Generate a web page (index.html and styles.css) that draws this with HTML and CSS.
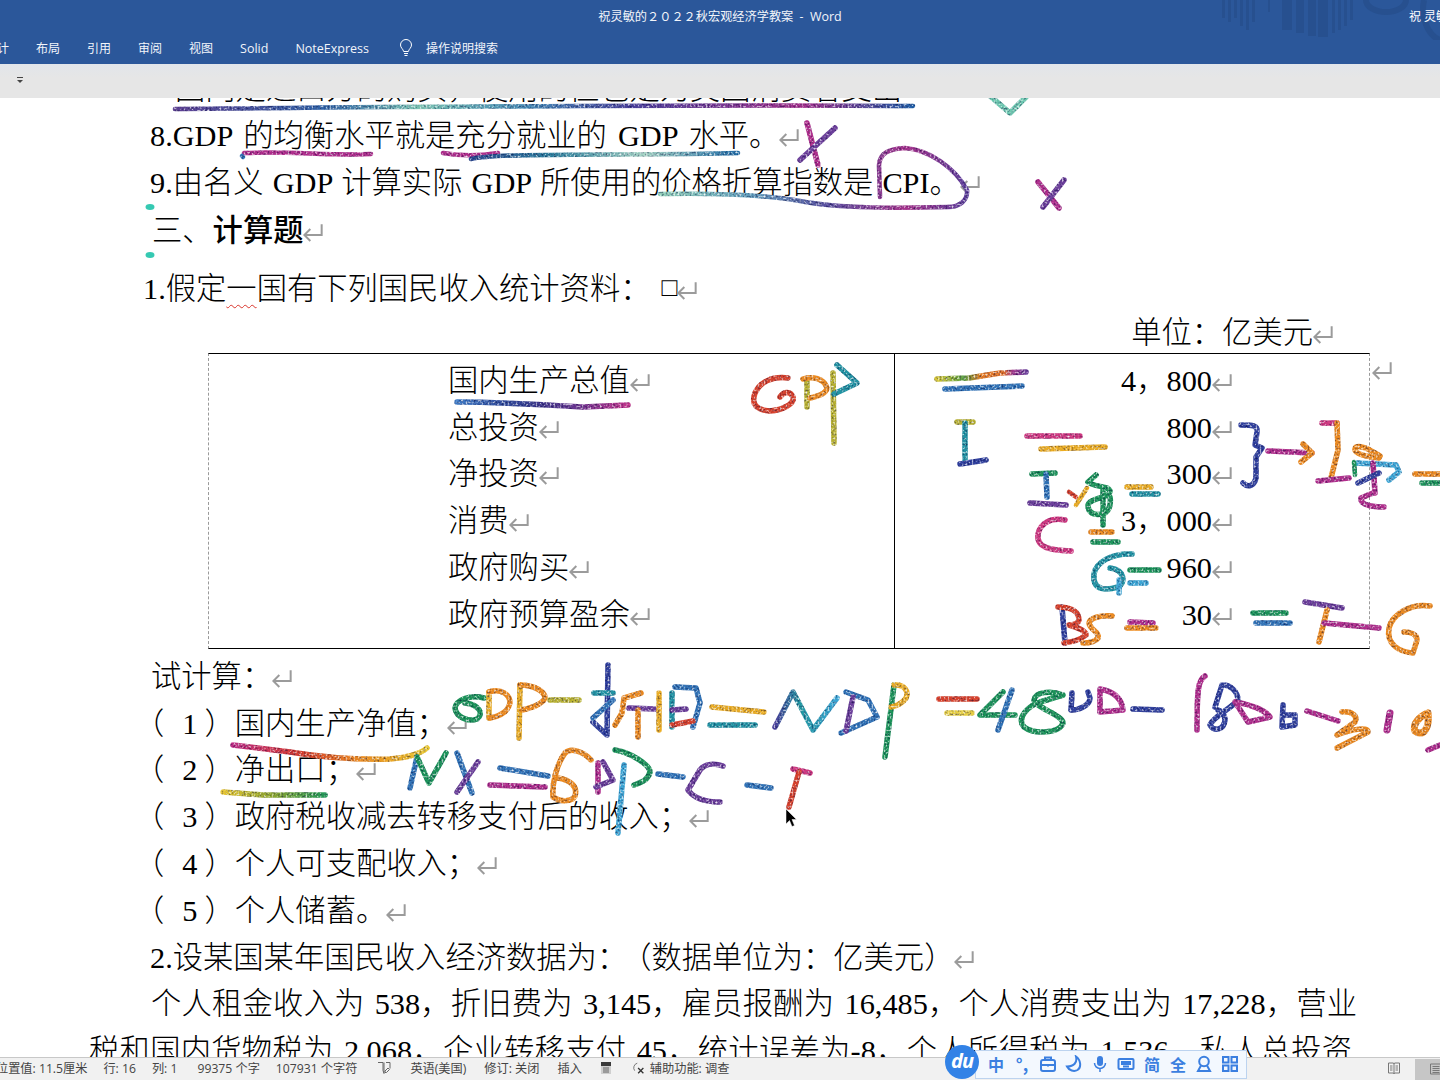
FILE: index.html
```html
<!DOCTYPE html>
<html lang="zh-CN">
<head>
<meta charset="utf-8">
<title>祝灵敏的2022秋宏观经济学教案 - Word</title>
<link rel="stylesheet" href="styles.css">
</head>
<body>
<svg class="sprite" aria-hidden="true">
  <symbol id="ret" viewBox="2 3 15 15"><path d="M16 4v8H3M7.500 7.500 3 12l4.500 4.500"/></symbol>
</svg>
<div class="page">
  <header class="ribbon">
    <svg class="ribbon-art" viewBox="0 0 220 40" aria-hidden="true">
      <rect x="2" y="0" width="3" height="18"/><rect x="8" y="0" width="3" height="22"/><rect x="14" y="0" width="3" height="18"/><rect x="20" y="0" width="3" height="26"/><rect x="26" y="0" width="3" height="30"/><rect x="32" y="0" width="3" height="22"/>
      <rect x="48" y="0" width="2" height="12"/><rect x="62" y="0" width="10" height="30"/><rect x="76" y="0" width="8" height="33"/><rect x="88" y="0" width="8" height="36"/><rect x="98" y="0" width="10" height="37"/><rect x="112" y="0" width="3" height="33"/><rect x="118" y="0" width="3" height="30"/><rect x="124" y="0" width="3" height="26"/><rect x="130" y="0" width="3" height="20"/>
      <path class="art-ring" d="M146 0a20 12 0 0 0 40 0M204 0a22 32 0 0 0 16 40"/>
    </svg>
    <div class="title-row">
      <span></span>
      <div class="doc-title">祝灵敏的２０２２秋宏观经济学教案&nbsp; -&nbsp; <span class="lat">Word</span></div>
      <div class="user-name">祝 灵敏</div>
    </div>
    <nav class="tab-row">
      <span>设计</span><span>布局</span><span>引用</span><span>审阅</span><span>视图</span><span class="lat">Solid</span><span class="lat">NoteExpress</span>
      <span class="tell">
        <svg class="bulb" viewBox="0 0 14 18" aria-hidden="true"><path d="M4.600 12.500C4.200 10 1.500 8.800 1.500 6a5.500 5.500 0 0 1 11 0c0 2.800-2.700 4-3.100 6.500zM5 14.500h4M5.500 16.500h3"/></svg>
        操作说明搜索
      </span>
    </nav>
  </header>
  <div class="qat">
    <svg class="qat-more" viewBox="0 0 8 8" aria-hidden="true"><path class="qat-line" d="M1 1.500h6"/><path class="qat-tri" d="M1 4h6L4 7z"/></svg>
  </div>

  <main class="doc">
    <div class="sheet">
      <p class="line p-first">国内是进口方的购买，使用的但也是为美国消费者支出</p>
      <p class="line p-8">8.GDP 的均衡水平就是充分就业的 GDP 水平。<svg class="ret"><use href="#ret"/></svg></p>
      <p class="line p-9">9.由名义 GDP 计算实际 GDP 所使用的价格折算指数是 CPI。<svg class="ret"><use href="#ret"/></svg></p>
      <h2 class="line heading">三、<b>计算题</b><svg class="ret"><use href="#ret"/></svg></h2>
      <p class="line p-q1">1.假定<span class="squiggle">一</span>国有下列国民收入统计资料：<span class="box-char">□</span><svg class="ret"><use href="#ret"/></svg></p>
      <p class="line unit">单位：亿美元<svg class="ret"><use href="#ret"/></svg></p>

      <div class="stats">
        <div class="stats-names">
          <div class="line">国内生产总值<svg class="ret"><use href="#ret"/></svg></div>
          <div class="line">总投资<svg class="ret"><use href="#ret"/></svg></div>
          <div class="line">净投资<svg class="ret"><use href="#ret"/></svg></div>
          <div class="line">消费<svg class="ret"><use href="#ret"/></svg></div>
          <div class="line">政府购买<svg class="ret"><use href="#ret"/></svg></div>
          <div class="line">政府预算盈余<svg class="ret"><use href="#ret"/></svg></div>
        </div>
        <div class="stats-values">
          <div class="line">4，800<svg class="ret"><use href="#ret"/></svg></div>
          <div class="line">800<svg class="ret"><use href="#ret"/></svg></div>
          <div class="line">300<svg class="ret"><use href="#ret"/></svg></div>
          <div class="line">3，000<svg class="ret"><use href="#ret"/></svg></div>
          <div class="line">960<svg class="ret"><use href="#ret"/></svg></div>
          <div class="line">30<svg class="ret"><use href="#ret"/></svg></div>
        </div>
        <svg class="ret row-end"><use href="#ret"/></svg>
      </div>

      <p class="line p-try">试计算：<svg class="ret"><use href="#ret"/></svg></p>
      <p class="line p-sub"><span class="po">（</span><span class="num">1</span>）国内生产净值；<svg class="ret"><use href="#ret"/></svg></p>
      <p class="line p-sub"><span class="po">（</span><span class="num">2</span>）净出口；<svg class="ret"><use href="#ret"/></svg></p>
      <p class="line p-sub"><span class="po">（</span><span class="num">3</span>）政府税收减去转移支付后的收入；<svg class="ret"><use href="#ret"/></svg></p>
      <p class="line p-sub"><span class="po">（</span><span class="num">4</span>）个人可支配收入；<svg class="ret"><use href="#ret"/></svg></p>
      <p class="line p-sub"><span class="po">（</span><span class="num">5</span>）个人储蓄。<svg class="ret"><use href="#ret"/></svg></p>
      <p class="line p-q2">2.设某国某年国民收入经济数据为：<span class="po2">（</span>数据单位为：亿美元）<svg class="ret"><use href="#ret"/></svg></p>
      <p class="line just p-body">个人租金收入为 538，折旧费为 3,145，雇员报酬为 16,485，个人消费支出为 17,228，营业</p>
      <p class="line just p-body2">税和国内货物税为 2,068，企业转移支付 45，统计误差为-8，个人所得税为 1,536，私人总投资</p>
    </div>

    <svg class="ink" viewBox="0 98 1440 960" aria-hidden="true">
      <defs>
        <filter id="glitter" filterUnits="userSpaceOnUse" x="0" y="98" width="1440" height="960" color-interpolation-filters="sRGB">
          <feTurbulence type="fractalNoise" baseFrequency="0.5" numOctaves="2" seed="4" result="n"/>
          <feColorMatrix in="n" type="matrix" values="0 0 0 0 1 0 0 0 0 1 0 0 0 0 1 2.500 0 0 0 -1.200" result="w"/>
          <feComposite in="w" in2="SourceAlpha" operator="in" result="sp"/>
          <feColorMatrix in="n" type="matrix" values="0 0 0 0 0 0 0 0 0 0 0 0 0 0 .2 0 1.500 0 0 -.7" result="d"/>
          <feComposite in="d" in2="SourceAlpha" operator="in" result="dk"/>
          <feMerge><feMergeNode in="SourceGraphic"/><feMergeNode in="dk"/><feMergeNode in="sp"/></feMerge>
        </filter>
        <linearGradient id="g-top" gradientUnits="userSpaceOnUse" x1="175" y1="0" x2="913" y2="0">
          <stop offset="0" stop-color="#5d3f92"/><stop offset=".2" stop-color="#2f63a8"/><stop offset=".33" stop-color="#7cc6b4"/><stop offset=".48" stop-color="#3f86b4"/><stop offset=".62" stop-color="#4a3f9c"/><stop offset=".85" stop-color="#a52d8a"/><stop offset="1" stop-color="#1f5fa8"/>
        </linearGradient>
        <linearGradient id="g-rib2" gradientUnits="userSpaceOnUse" x1="471" y1="0" x2="738" y2="0">
          <stop offset="0" stop-color="#27468f"/><stop offset=".3" stop-color="#2a7f9d"/><stop offset=".65" stop-color="#a3d3c3"/><stop offset="1" stop-color="#1f6ea8"/>
        </linearGradient>
        <linearGradient id="g-cpi" gradientUnits="userSpaceOnUse" x1="660" y1="0" x2="967" y2="0">
          <stop offset="0" stop-color="#8ed0b6"/><stop offset=".3" stop-color="#5d9dbd"/><stop offset=".55" stop-color="#5a4ea0"/><stop offset=".8" stop-color="#a8308c"/><stop offset="1" stop-color="#5c3d9b"/>
        </linearGradient>
        <linearGradient id="g-gdp" gradientUnits="userSpaceOnUse" x1="457" y1="0" x2="628" y2="0">
          <stop offset="0" stop-color="#3a78c4"/><stop offset=".4" stop-color="#2f3a8e"/><stop offset=".7" stop-color="#6c3492"/><stop offset="1" stop-color="#c4318a"/>
        </linearGradient>
        <linearGradient id="g-eq" gradientUnits="userSpaceOnUse" x1="937" y1="0" x2="1026" y2="0">
          <stop offset="0" stop-color="#d9c82f"/><stop offset=".3" stop-color="#5aa240"/><stop offset=".5" stop-color="#ea7b1e"/><stop offset=".75" stop-color="#e07028"/><stop offset=".85" stop-color="#a5358c"/><stop offset="1" stop-color="#6c3d9b"/>
        </linearGradient>
        <linearGradient id="g-red" gradientUnits="userSpaceOnUse" x1="233" y1="0" x2="427" y2="0">
          <stop offset="0" stop-color="#c12a84"/><stop offset=".35" stop-color="#d83a2a"/><stop offset=".65" stop-color="#ee8a1d"/><stop offset="1" stop-color="#ecc92c"/>
        </linearGradient>
        <linearGradient id="g-net" gradientUnits="userSpaceOnUse" x1="223" y1="0" x2="325" y2="0">
          <stop offset="0" stop-color="#e8c62e"/><stop offset=".5" stop-color="#8aa62e"/><stop offset="1" stop-color="#1f9a55"/>
        </linearGradient>
        <linearGradient id="g-n" gradientUnits="userSpaceOnUse" x1="775" y1="0" x2="837" y2="0">
          <stop offset="0" stop-color="#4a3f9c"/><stop offset=".4" stop-color="#1f97a0"/><stop offset="1" stop-color="#3aa8d8"/>
        </linearGradient>
      </defs>
      <g class="ink-strokes" filter="url(#glitter)">
        <path stroke="url(#g-top)" class="w4" d="M175 109 C400 107 700 104 913 106"/>
        <path class="mint" d="M990 96 L1010 113 L1027 96"/>
        <path class="magenta w4" d="M244 153 C290 151 330 156 371 154"/>
        <path class="blue w4" d="M242 156 L243 157"/>
        <path class="magenta w4" d="M443 153 C460 156 480 156 498 153"/>
        <path stroke="url(#g-rib2)" class="w4" d="M471 159 C500 152 640 156 738 153"/>
        <path class="magenta" d="M807 123 L818 165"/>
        <path class="purple" d="M835 128 L800 160"/>
        <path stroke="url(#g-cpi)" class="w4" d="M880 197 L879 165 C880 152 890 149 905 148 C930 150 955 168 967 190 C968 200 960 207 948 207 C900 208 840 209 800 201 C760 194 710 193 660 194"/>
        <path class="magenta" d="M1038 182 L1059 208"/>
        <path class="purple" d="M1064 180 L1043 207"/>

        <path stroke="url(#g-gdp)" d="M457 402 C500 402 550 405 583 407 L628 405"/>
        <path class="red" d="M788 378 C772 376 760 382 755 393 C751 404 756 410 770 411 C782 410 795 404 793 397 C790 390 783 392 780 397"/>
        <path class="olive" d="M807 380 L807 407"/>
        <path class="orange" d="M803 379 C812 376 824 378 827 388 C826 394 818 396 810 398"/>
        <path class="olive" d="M833 373 L834 443"/>
        <path class="teal" d="M837 365 L857 383 L834 394"/>

        <path stroke="url(#g-eq)" d="M937 379 L969 378 L1000 373 L1026 372"/>
        <path class="blue" d="M945 389 L1022 386"/>
        <path class="olive" d="M957 422 L973 422"/>
        <path class="teal" d="M965 423 L965 463"/>
        <path class="navy" d="M960 464 L986 460"/>
        <path class="pink" d="M1027 436 L1080 436"/>
        <path class="amber" d="M1041 449 L1105 447"/>
        <path class="green" d="M1032 474 L1055 473"/>
        <path class="blue" d="M1046 474 L1047 497"/>
        <path class="purple" d="M1030 503 L1066 505"/>
        <path class="red w4" d="M1069 492 L1076 497"/>
        <path class="amber w4" d="M1076 505 L1087 488"/>
        <path class="green" d="M1096 475 L1088 482 C1095 488 1110 485 1110 492 C1108 498 1090 498 1088 505 C1088 515 1098 516 1105 513 C1110 510 1111 502 1110 497"/>
        <path class="green" d="M1103 490 L1103 525"/>
        <path class="amber" d="M1127 487 L1151 487"/>
        <path class="teal" d="M1132 494 L1158 494"/>
        <path class="pink" d="M1065 520 C1050 517 1040 524 1038 534 C1036 548 1050 550 1071 551"/>
        <path class="orange" d="M1091 532 L1112 532"/>
        <path class="green" d="M1093 542 L1118 542"/>
        <path class="teal" d="M1132 554 C1112 553 1096 562 1094 574 C1092 592 1108 590 1118 587 C1126 583 1125 570 1110 568"/>
        <path class="cyan" d="M1119 580 L1119 593"/>
        <path class="green" d="M1130 570 L1159 570"/>
        <path class="cyan" d="M1130 583 L1146 583"/>
        <path class="navy" d="M1062 607 L1065 643"/>
        <path class="red" d="M1058 607 C1072 607 1079 612 1079 620 C1078 625 1069 625 1069 625 C1080 628 1086 632 1086 635 C1080 640 1072 642 1064 643"/>
        <path class="orange" d="M1112 616 C1100 615 1090 618 1089 623 C1090 630 1100 632 1098 638 C1095 642 1090 643 1083 643"/>
        <path class="magenta" d="M1130 622 L1153 623"/>
        <path class="orange" d="M1127 628 L1156 628"/>
        <path class="navy" d="M1241 425 C1252 425 1258 425 1257 432 L1255 445 L1262 448 L1256 457 L1256 478 C1254 486 1248 488 1243 483"/>
        <path class="magenta" d="M1268 451 L1312 453"/>
        <path class="orange" d="M1303 444 L1312 453 L1301 462"/>
        <path class="pink" d="M1322 423 L1337 423"/>
        <path class="orange" d="M1337 423 L1338 450 L1331 478"/>
        <path class="magenta" d="M1318 481 L1349 478"/>
        <path class="orange" d="M1380 456 C1370 450 1362 445 1356 447 C1352 452 1360 456 1379 458"/>
        <path class="cyan" d="M1355 463 L1396 465 L1399 472 L1389 480"/>
        <path class="green w4" d="M1354 462 L1355 475"/>
        <path class="magenta" d="M1373 463 L1375 493"/>
        <path class="navy" d="M1358 483 L1379 473"/>
        <path class="magenta" d="M1373 493 L1361 498 C1360 505 1372 507 1384 507"/>
        <path class="orange" d="M1415 474 L1440 474"/>
        <path class="green" d="M1422 483 L1440 483"/>
        <path class="green" d="M1253 613 L1286 613"/>
        <path class="blue" d="M1256 623 L1290 623"/>
        <path class="purple" d="M1305 602 L1342 608"/>
        <path class="orange" d="M1327 610 L1319 642"/>
        <path class="magenta" d="M1324 623 L1379 628"/>
        <path class="orange" d="M1430 606 C1410 603 1392 615 1389 628 C1386 645 1400 652 1413 653 L1417 640 C1417 634 1410 632 1404 632"/>

        <path class="green" d="M484 698 C470 694 456 700 455 708 C456 718 470 722 477 719 C484 714 480 705 465 703"/>
        <path class="amber" d="M489 692 L489 718"/>
        <path class="orange" d="M489 692 C502 688 510 695 510 703 C508 712 500 716 490 718"/>
        <path class="amber" d="M520 685 L519 738"/>
        <path class="orange" d="M520 685 C535 685 545 692 545 698 C542 705 530 708 522 710"/>
        <path class="olive" d="M550 700 L579 700"/>
        <path class="navy" d="M608 665 L607 735 L593 722"/>
        <path class="teal" d="M594 693 L613 693"/>
        <path class="blue" d="M593 718 L613 700"/>
        <path class="orange" d="M641 693 L624 698 L622 713 L615 725"/>
        <path class="purple" d="M629 708 L655 709"/>
        <path class="orange" d="M638 710 L638 737"/>
        <path class="amber" d="M659 693 L659 730"/>
        <path class="teal" d="M672 693 L672 727"/>
        <path class="blue" d="M675 687 L696 688 L700 703 L693 727"/>
        <path class="purple" d="M672 710 L686 709"/>
        <path class="red" d="M672 725 L693 721"/>
        <path class="amber" d="M712 707 L764 712"/>
        <path class="teal" d="M710 725 L755 725"/>
        <path stroke="url(#g-n)" d="M775 727 L793 692 L813 730 L837 698"/>
        <path class="blue" d="M846 692 L868 700 L877 717 L841 733"/>
        <path class="purple" d="M853 697 L846 731"/>
        <path class="green" d="M894 685 L885 757"/>
        <path class="amber" d="M894 685 C905 684 909 692 906 698 C902 704 896 706 891 707"/>

        <path class="red" d="M939 699 L977 699"/>
        <path class="yellow" d="M947 713 L972 713"/>
        <path class="green" d="M1003 692 L980 715 L1015 715"/>
        <path class="blue" d="M1012 690 L998 730"/>
        <path class="green" d="M1063 695 C1050 690 1035 692 1034 700 C1036 708 1063 715 1063 723 C1060 733 1035 735 1024 727 C1016 718 1028 706 1040 702 L1063 695"/>
        <path class="navy" d="M1072 693 L1071 710 C1080 710 1090 705 1090 698 L1088 692"/>
        <path class="magenta" d="M1100 690 L1100 712 L1123 710 C1122 700 1116 692 1100 689"/>
        <path class="navy" d="M1133 709 L1162 710"/>
        <path class="magenta" d="M1205 676 C1198 680 1197 690 1197 730"/>
        <path class="navy" d="M1215 707 L1222 685 C1230 684 1238 692 1238 700 C1232 708 1214 716 1210 725 C1214 732 1224 730 1225 720 C1225 714 1220 710 1218 710"/>
        <path class="magenta" d="M1235 702 L1248 722 L1270 717 C1265 710 1250 704 1235 702"/>
        <path class="navy" d="M1283 705 L1282 727 L1295 725 L1295 715 L1283 715"/>
        <path class="magenta" d="M1307 711 L1338 721"/>
        <path class="orange" d="M1342 712 C1352 711 1358 716 1355 722 L1337 735 C1350 730 1368 726 1368 732 L1337 748"/>
        <path class="magenta w6" d="M1390 713 L1387 730"/>
        <path class="orange w6" d="M1428 713 C1420 716 1412 724 1415 731 C1422 737 1430 730 1428 713"/>
        <path class="magenta" d="M1428 750 L1440 745"/>

        <path stroke="url(#g-red)" d="M233 745 L290 752 C320 757 350 760 390 759 C405 758 420 754 427 748"/>
        <path stroke="url(#g-net)" d="M223 792 L263 795 L325 795"/>
        <path class="blue" d="M410 788 L417 757"/>
        <path class="green" d="M417 757 L429 783 L446 753"/>
        <path class="blue" d="M457 753 L472 793"/>
        <path class="purple" d="M478 762 L457 792"/>
        <path class="blue" d="M500 768 L548 776"/>
        <path class="magenta" d="M490 785 L545 787"/>
        <path class="orange" d="M591 760 C582 750 570 748 565 753 C556 765 552 785 553 797 C560 802 572 802 575 796 C578 786 570 780 558 778"/>
        <path class="magenta" d="M598 763 L598 792"/>
        <path class="purple" d="M603 762 L613 780 L596 787"/>
        <path class="cyan" d="M624 765 L618 833"/>
        <path class="green" d="M615 750 C630 752 650 765 650 772 C648 780 642 782 634 785"/>
        <path class="blue" d="M658 774 L683 777"/>
        <path class="purple" d="M723 766 C712 762 704 765 700 770 L688 790 C695 800 710 802 720 802"/>
        <path class="blue" d="M747 785 L771 788"/>
        <path class="pink" d="M793 769 L810 773"/>
        <path class="red" d="M799 772 L789 807"/>
      </g>
      <ellipse class="dot" cx="150" cy="207" rx="4.500" ry="3"/>
      <ellipse class="dot" cx="150" cy="255" rx="4.500" ry="3"/>
      <path class="cursor" d="M786 809V824L789.500 820.500 792 826.500 794.500 825.500 792 819.500H796.500z"/>
    </svg>
  </main>

  <footer class="status">
    <span class="st-pos">位置值: 11.5厘米</span>
    <span>行: 16</span>
    <span>列: 1</span>
    <span class="st-wide">99375 个字</span>
    <span>107931 个字符</span>
    <svg class="st-ic st-book" viewBox="0 0 14 14" aria-hidden="true"><path d="M1 1.500h5v8l1 3V1.500M9 1.500h4v6M8 10l3-3 1.500 1.500-3 3H8z"/></svg>
    <span>英语(美国)</span>
    <span class="st-m2">修订: 关闭</span>
    <span class="st-m2">插入</span>
    <svg class="st-ic st-macro" viewBox="0 0 14 14" aria-hidden="true"><rect class="m-top" x="2" y="1" width="10" height="4"/><rect class="m-body" x="2" y="5" width="10" height="8"/><path class="m-grid" d="M4 7h6M4 9h6M4 11h6"/></svg>
    <span class="st-access">
      <svg class="st-ic" viewBox="0 0 16 16" aria-hidden="true"><path d="M6 2.500a5.500 5.500 0 0 0-3 8.500"/><path class="x-mark" d="M7 8l6 6M13 8l-6 6"/></svg>
      辅助功能: 调查
    </span>
    <span class="st-spacer"></span>
    <svg class="st-ic st-read" viewBox="0 0 14 14" aria-hidden="true"><path d="M1.500 2h5l.500 1 .500-1h5v10h-5l-.500 1-.500-1h-5zM7 3v9M3 5h2.500M3 7h2.500M3 9h2.500M8.500 5H11M8.500 7H11M8.500 9H11"/></svg>
    <span class="st-view"><svg class="st-ic st-read" viewBox="0 0 14 14" aria-hidden="true"><path d="M1.500 2h11v10h-11zM3.500 4.500h7M3.500 6.500h7M3.500 8.500h7M3.500 10.500h7"/></svg></span>
  </footer>

  <aside class="du-bar">
    <span class="du-logo">du</span>
    <div class="du-tools">
      <span class="du-t">中</span>
      <span class="du-t du-punct">°,</span>
      <svg class="du-i" viewBox="0 0 18 18" aria-hidden="true"><rect x="2" y="5" width="14" height="11" rx="2"/><path d="M6 5V2.500h6V5M2 10h14M9 9v2.500"/></svg>
      <svg class="du-i" viewBox="0 0 18 18" aria-hidden="true"><path d="M11 1.500c1.500 6-2 10-9 10 2 4 7 5.500 10.500 3.500C16.500 12.500 16 5 11 1.500z"/></svg>
      <svg class="du-i du-fill" viewBox="0 0 18 18" aria-hidden="true"><rect x="6" y="1" width="6" height="10" rx="3"/><path class="du-thin" d="M3.500 8a5.500 5.500 0 0 0 11 0M9 13.500V17"/></svg>
      <svg class="du-i" viewBox="0 0 18 18" aria-hidden="true"><rect x="1.500" y="4" width="15" height="10" rx="1"/><path d="M4 7h10M4 9h10M6 11.500h6"/></svg>
      <span class="du-t">简</span>
      <span class="du-t">全</span>
      <svg class="du-i" viewBox="0 0 18 18" aria-hidden="true"><circle cx="9" cy="6.500" r="4.800"/><path d="M6 10.500 3 16h12l-3-5.500"/></svg>
      <svg class="du-i" viewBox="0 0 18 18" aria-hidden="true"><rect x="2" y="2" width="5.500" height="5.500"/><rect x="10.500" y="2" width="5.500" height="5.500"/><rect x="2" y="10.500" width="5.500" height="5.500"/><rect x="10.500" y="10.500" width="5.500" height="5.500"/></svg>
    </div>
  </aside>
</div>
</body>
</html>
```
FILE: styles.css
```css
* { box-sizing: border-box; }
html, body { margin: 0; padding: 0; background: #fff; }
.sprite { position: absolute; width: 0; height: 0; }
.page {
  position: relative;
  width: 1440px;
  height: 1080px;
  overflow: hidden;
  display: flex;
  flex-direction: column;
  font-family: "Open Sans", "Noto Sans CJK SC", sans-serif;
}

/* title + tabs */
.ribbon {
  position: relative;
  height: 64px;
  flex: none;
  background: #2b579a;
  color: #fff;
  font-size: 12px;
  overflow: hidden;
}
.ribbon-art { position: absolute; left: 1220px; top: 0; width: 220px; height: 40px; fill: #27508f; }
.art-ring { fill: none; stroke: #27508f; stroke-width: 6; }
.lat { font-size: 12.500px; }
.title-row {
  position: relative;
  height: 32px;
  display: grid;
  grid-template-columns: 1fr auto 1fr;
  align-items: center;
}
.doc-title { font-size: 12.200px; white-space: nowrap; color: #f2f5fa; }
.user-name { justify-self: end; width: 31px; overflow: hidden; white-space: nowrap; font-size: 12px; }
.tab-row {
  position: relative;
  height: 32px;
  display: flex;
  align-items: center;
  gap: 27px;
  margin-left: -15px;
  white-space: nowrap;
  color: #f2f5fa;
}
.tell { display: flex; align-items: center; gap: 13px; margin-left: 3px; }
.bulb { width: 14px; height: 18px; fill: none; stroke: #fff; stroke-width: 1; }

/* quick access strip */
.qat {
  height: 34px;
  flex: none;
  background: linear-gradient(#e1e5ea, #e6e6e6 40%);
  display: flex;
  align-items: center;
  padding-left: 16px;
}
.qat-more { width: 8px; height: 8px; margin-bottom: 2px; }
.qat-line { stroke: #444; stroke-width: 1; fill: none; }
.qat-tri { fill: #444; }

/* document */
.doc { position: relative; flex: 1; min-height: 0; overflow: hidden; background: #fff; }
.sheet {
  margin-top: -32px;
  font-family: "Liberation Serif", "Noto Sans CJK SC", serif;
  font-size: 30.300px;
  font-weight: 300;
  word-spacing: 2.500px;
  color: #000;
}
.line { margin: 0; height: 46.800px; line-height: 46.800px; white-space: nowrap; font-size: inherit; font-weight: inherit; }
.p-first { padding-left: 175px; }
.p-8, .p-9, .p-q2 { padding-left: 150px; }
.p-8 { word-spacing: 3.500px; }
.p-9 { word-spacing: 1.500px; }
.heading { padding-left: 152px; margin-top: 2px; }
.heading b { font-weight: 500; }
.p-q1 { padding-left: 143px; margin-top: 10px; }
.unit { text-align: right; padding-right: 107px; margin-top: -2px; }
.squiggle { text-decoration: underline wavy #d9342b 1px; text-underline-offset: 5px; }
.box-char { font-size: 26px; margin-left: 11px; vertical-align: 3px; }
.ret { width: 20px; height: 20px; vertical-align: -2px; fill: none; stroke: #9b9b9b; stroke-width: 1.500; }

.stats {
  position: relative;
  width: 1162px;
  height: 296px;
  margin: -4px 0 0 208px;
  padding: 4px 0 0;
  display: grid;
  grid-template-columns: 686px 1fr;
  border-top: 1px solid #000;
  border-bottom: 1px solid #000;
  border-left: 1px dashed #9a9a9a;
  border-right: 1px dashed #9a9a9a;
}
.stats-names { padding-left: 239px; border-right: 1px solid #000; margin: -4px 0 -1px; padding-top: 4px; }
.stats-values { text-align: right; padding-right: 137px; }
.row-end { position: absolute; top: 7px; right: -23px; }

.p-try { padding-left: 151px; margin-top: 5px; }
.p-sub { padding-left: 151px; }
.po { display: inline-block; margin: 0 17px 0 -17px; }
.num { display: inline-block; padding: 0 7px 0 1px; }
.p-q2 { padding-left: 150px; text-spacing-trim: space-all; }
.po2 { margin-left: -6px; }
.just { width: 1357px; text-align: justify; text-align-last: justify; white-space: normal; overflow: hidden; }
.p-body { padding-left: 151px; }
.p-body2 { padding-left: 89px; width: 1352px; }

/* ink */
.ink { position: absolute; left: 0; top: 0; width: 1440px; height: 960px; pointer-events: none; }
.ink-strokes path { fill: none; stroke-width: 5.500; stroke-linecap: round; stroke-linejoin: round; }
.ink-strokes .w4 { stroke-width: 4.500; }
.ink-strokes .w6 { stroke-width: 7; }
.red { stroke: #d9402a; }
.orange { stroke: #ee8a1d; }
.amber { stroke: #edae22; }
.yellow { stroke: #e8cf40; }
.olive { stroke: #b9b22e; }
.green { stroke: #1a9458; }
.teal { stroke: #1f93a3; }
.mint { stroke: #6cc9b0; }
.cyan { stroke: #3ba6d6; }
.blue { stroke: #2f73b8; }
.navy { stroke: #2f3f9e; }
.purple { stroke: #6c3d9b; }
.magenta { stroke: #b12c8c; }
.pink { stroke: #d0357f; }
.dot { fill: #35c9b2; }
.cursor { fill: #000; stroke: #fff; stroke-width: .5; }

/* status bar */
.status {
  height: 23px;
  flex: none;
  background: #f1f1f1;
  border-top: 1px solid #c8c8c8;
  display: flex;
  align-items: center;
  gap: 16px;
  padding-bottom: 2px;
  font-size: 12.200px;
  color: #444;
  white-space: nowrap;
  position: relative;
}
.st-pos { margin-left: -4px; }
.st-wide { margin-left: 4px; }
.st-m2 { margin-left: 2px; }
.st-ic { width: 14px; height: 14px; fill: none; stroke: #666; stroke-width: 1; flex: none; }
.st-book { margin: 0 3px 0 4px; }
.st-macro { margin: 0 3px 0 1px; stroke: none; }
.m-top { fill: #3a3a3a; }
.m-body { fill: #cfcfcf; }
.m-grid { stroke: #666; stroke-width: 1; }
.st-access { display: flex; align-items: center; gap: 4px; }
.x-mark { stroke: #333; stroke-width: 1.500; }
.st-spacer { flex: 1; }
.st-read { stroke: #777; }
.st-view { width: 25px; height: 21px; margin: 0 0 -2px -2px; background: #c6c6c6; display: flex; align-items: center; justify-content: flex-start; padding-left: 14px; }

/* floating IME bar */
.du-bar { position: absolute; left: 945px; top: 1045px; display: flex; align-items: center; height: 34px; }
.du-logo {
  position: relative;
  width: 34px;
  height: 34px;
  border-radius: 50%;
  background: #3282e6;
  color: #fff;
  font: italic 700 20px/32px "Open Sans", sans-serif;
  letter-spacing: -1px;
  text-align: center;
  flex: none;
  z-index: 1;
}
.du-tools {
  margin-left: -4px;
  margin-top: 4px;
  width: 272px;
  height: 29px;
  background: #f3f8fe;
  border: 1px solid #bcd3ef;
  display: flex;
  align-items: center;
  gap: 8px;
  padding-left: 11px;
}
.du-t { width: 18px; text-align: center; font: 700 16px/18px "Noto Sans CJK SC", sans-serif; color: #3b7fe0; flex: none; }
.du-punct { font-size: 17px; line-height: 14px; }
.du-i { width: 18px; height: 18px; fill: none; stroke: #3b7fe0; stroke-width: 2; flex: none; }
.du-fill rect { fill: #3b7fe0; stroke: none; }
.du-thin { stroke-width: 1.500; }
```
